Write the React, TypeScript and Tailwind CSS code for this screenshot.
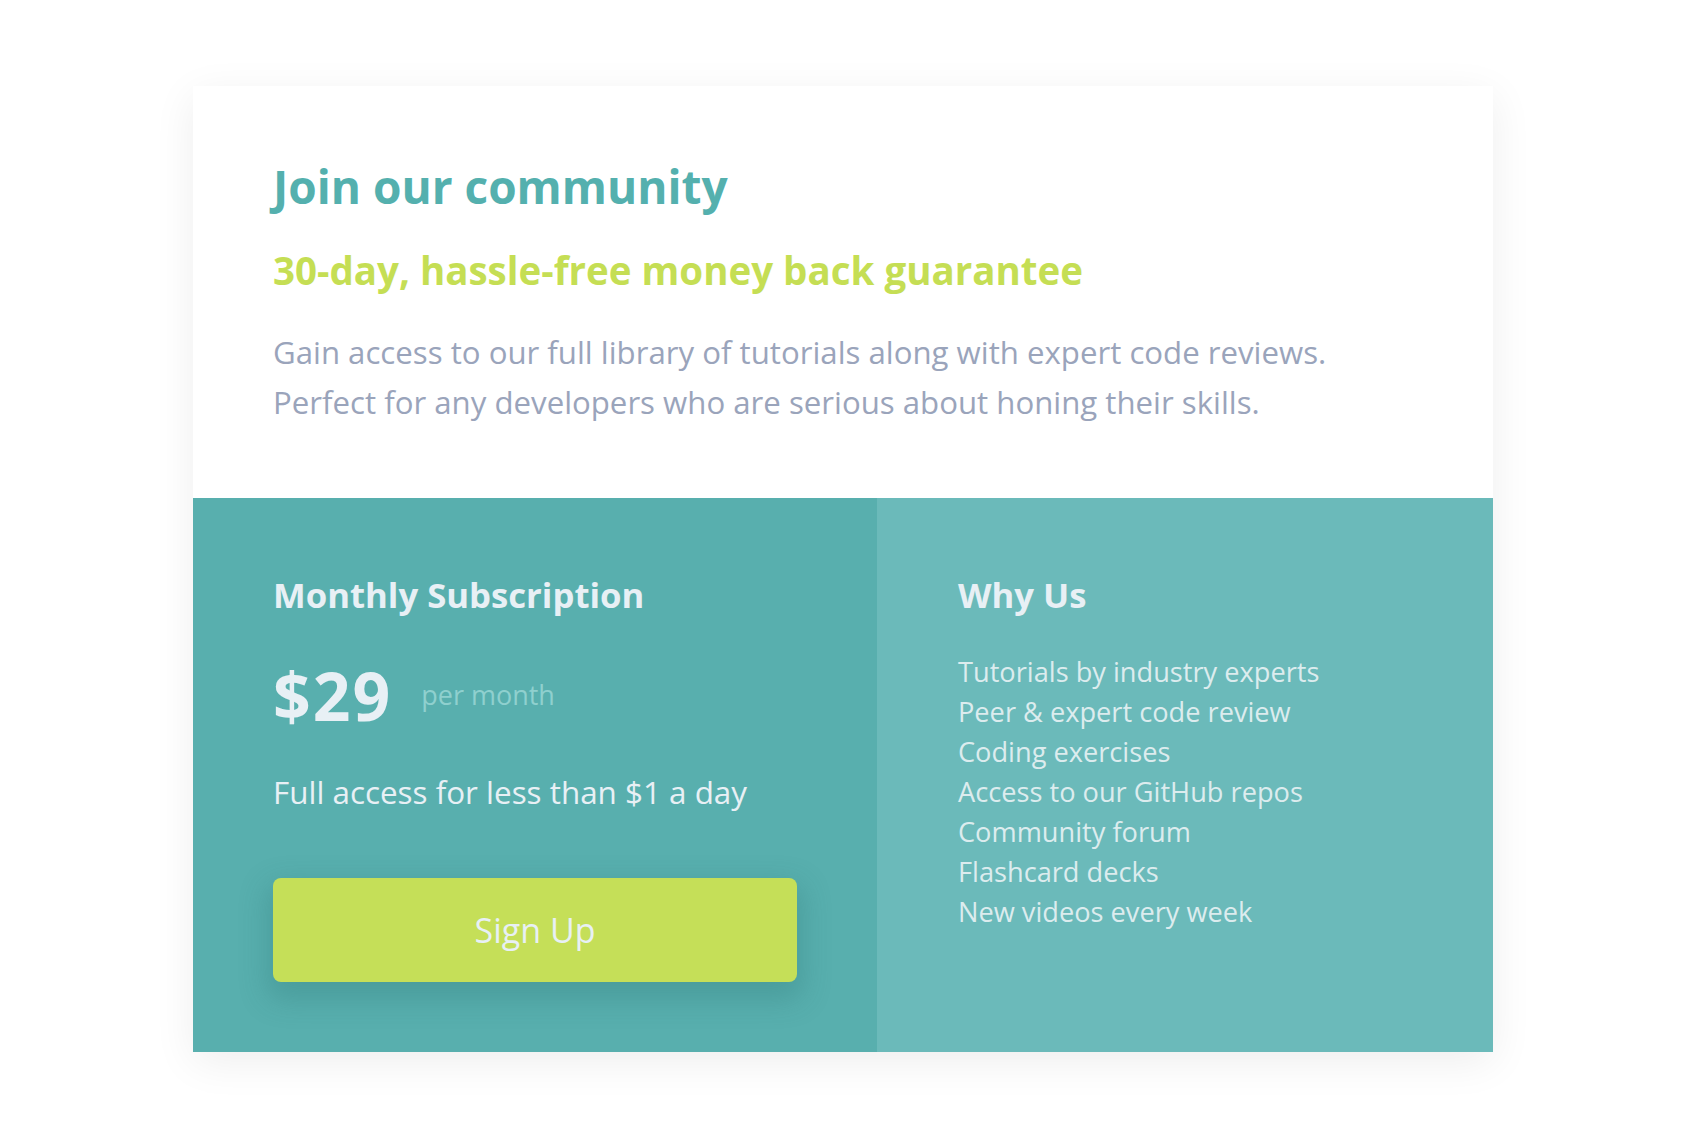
const perks = [
  "Tutorials by industry experts",
  "Peer & expert code review",
  "Coding exercises",
  "Access to our GitHub repos",
  "Community forum",
  "Flashcard decks",
  "New videos every week",
];

export default function App() {
  return (
    <main className="min-h-screen bg-white pt-[86px] font-['Open_Sans',sans-serif]">
      <div className="mx-auto w-[1300px] bg-white shadow-[0_10px_40px_rgba(0,0,0,0.07)]">
        {/* Top */}
        <section className="px-[80px] pt-[72px] pb-[71px]">
          <h1 className="text-[46px] leading-[56px] font-bold text-[#54b0ae]">
            Join our community
          </h1>
          <h2 className="mt-[34px] text-[38.5px] leading-[44px] font-bold text-[#c5de54]">
            30-day, hassle-free money back guarantee
          </h2>
          <p className="mt-[35px] text-[31.2px] leading-[50px] text-[#9aa4bb]">
            Gain access to our full library of tutorials along with expert code reviews.
            <br />
            Perfect for any developers who are serious about honing their skills.
          </p>
        </section>

        {/* Bottom */}
        <div className="grid grid-cols-[684px_1fr]">
          <section className="bg-[#58afae] px-[80px] pt-[75px] pb-[70px]">
            <h3 className="text-[34.7px] leading-[44px] font-bold text-[#e8f0f5]">
              Monthly Subscription
            </h3>
            <div className="mt-[42px] flex items-center gap-[29px]">
              <span className="text-[66px] leading-[72px] font-bold tracking-[2px] text-[#e8f0f5]">$29</span>
              <span className="text-[27px] leading-[36px] text-[#8fd0ce]">per month</span>
            </div>
            <p className="mt-[43px] text-[31.4px] leading-[36px] text-[#e8f0f5]">
              Full access for less than $1 a day
            </p>
            <button className="mt-[68px] h-[104px] w-full rounded-[8px] bg-[#c5df58] text-[34px] text-[#e8f0f5] shadow-[0_12px_28px_6px_rgba(40,110,110,0.28)]">
              Sign Up
            </button>
          </section>

          <section className="bg-[#6bbaba] px-[81px] pt-[75px] pb-[70px]">
            <h3 className="text-[34.7px] leading-[44px] font-bold text-[#e8f0f5]">Why Us</h3>
            <ul className="mt-[35px] text-[27.2px] leading-[40px] text-[#dcecee]">
              {perks.map((p) => (
                <li key={p}>{p}</li>
              ))}
            </ul>
          </section>
        </div>
      </div>
    </main>
  );
}
